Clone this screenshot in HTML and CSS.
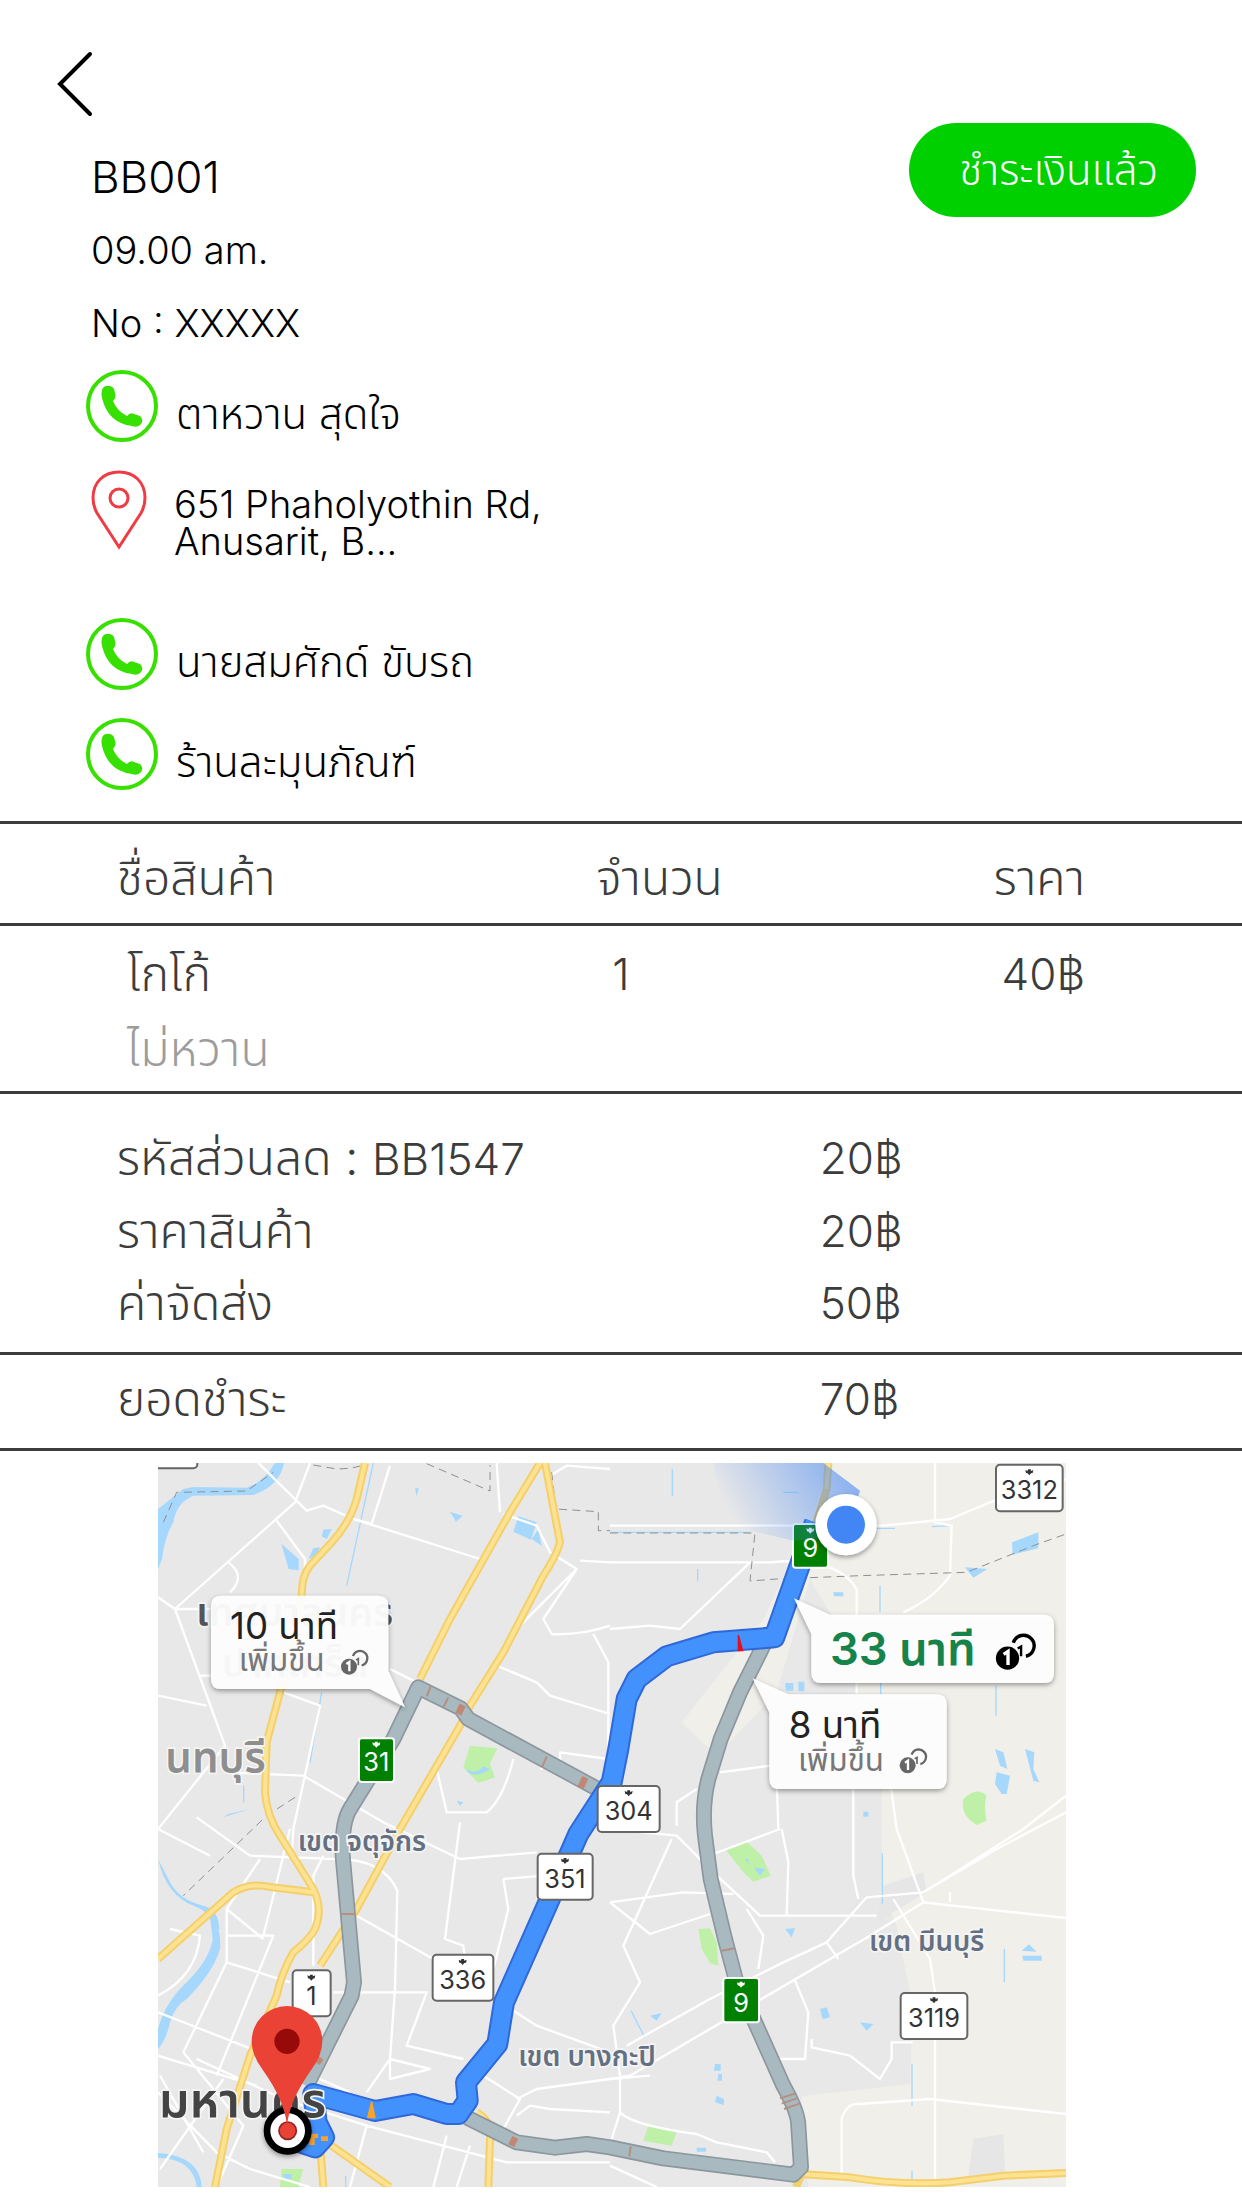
FILE: index.html
```html
<!DOCTYPE html>
<html lang="th">
<head>
<meta charset="utf-8">
<meta name="viewport" content="width=device-width, initial-scale=1">
<title>BB001</title>
<link rel="stylesheet" href="styles.css">
</head>
<body>
<svg class="defs" aria-hidden="true">
  <symbol id="phone" viewBox="0 0 72 72">
    <circle cx="36" cy="36" r="34" fill="none" stroke="#38e000" stroke-width="4"/>
    <path d="M16 20C17 15 25 14 28 19L29.500 25Q30 28 27 31Q31 41 41 46Q44 42 48 44L54 46Q58 50 55 54Q52 58 46 56Q22 53 16 28Q15 23 16 20Z" fill="#38e000"/>
  </symbol>
</svg>
<header class="top">
  <button class="back" type="button" aria-label="ย้อนกลับ">
    <svg viewBox="0 0 36 66" width="36" height="66"><path d="M33 3L3 33L33 63" fill="none" stroke="#000" stroke-width="4" stroke-linecap="round"/></svg>
  </button>
</header>
<main>
  <section class="order">
    <div class="order-info">
      <h1 class="order-id">BB001</h1>
      <p class="line">09.00 am.</p>
      <p class="line">No : XXXXX</p>
    </div>
    <button class="paid" type="button">ชำระเงินแล้ว</button>
  </section>
  <section class="contacts">
    <a class="contact" href="#customer"><svg class="icon"><use href="#phone"/></svg><span>ตาหวาน สุดใจ</span></a>
    <div class="address">
      <svg class="icon" viewBox="0 0 72 80"><path d="M33 77L11 43Q7 36 7 28C7 12 18 2 33 2S59 12 59 28Q59 36 55 43Z" fill="none" stroke="#ef3b43" stroke-width="3"/><circle cx="33" cy="28" r="9" fill="none" stroke="#ef3b43" stroke-width="3"/></svg>
      <address>651 Phaholyothin Rd,<br>Anusarit, B...</address>
    </div>
    <a class="contact" href="#driver"><svg class="icon"><use href="#phone"/></svg><span>นายสมศักด์ ขับรถ</span></a>
    <a class="contact" href="#shop"><svg class="icon"><use href="#phone"/></svg><span>ร้านละมุนภัณฑ์</span></a>
  </section>
  <table class="items">
    <thead><tr><th class="name">ชื่อสินค้า</th><th class="qty">จำนวน</th><th class="price">ราคา</th></tr></thead>
    <tbody><tr><td class="name">โกโก้<small>ไม่หวาน</small></td><td class="qty">1</td><td class="price">40฿</td></tr></tbody>
  </table>
  <table class="totals">
    <tbody>
      <tr><th>รหัสส่วนลด : <span class="code">BB1547</span></th><td>20฿</td></tr>
      <tr><th>ราคาสินค้า</th><td>20฿</td></tr>
      <tr><th>ค่าจัดส่ง</th><td>50฿</td></tr>
    </tbody>
    <tfoot><tr><th>ยอดชำระ</th><td>70฿</td></tr></tfoot>
  </table>
  <figure class="map">
    <svg viewBox="24 12 2724 2172" role="img" aria-label="แผนที่เส้นทาง">
      <defs>
        <linearGradient id="beam" x1="0" x2="1" y1=".3" y2="0"><stop offset="0" stop-color="#4285f4" stop-opacity="0"/><stop offset="1" stop-color="#4285f4" stop-opacity=".65"/></linearGradient>
        <filter id="shadow" x="-20%" y="-20%" width="140%" height="150%"><feDropShadow dx="0" dy="6" stdDeviation="8" flood-opacity=".4"/></filter>
        <g id="crest"><path d="M-12-7L-5-4L-4-9H4L5-4L12-7L10 2L5 3L0 9L-5 3L-10 2Z"/></g>
        <g id="toll"><circle cx="-12" cy="10" r="24"/><path d="M0-22A22 22 0 1 1 26 6" fill="none" stroke="currentColor" stroke-width="7"/><path d="M9-10L16-14V6" fill="none" stroke="currentColor" stroke-width="5"/><path d="M-20 2L-11-4V24" fill="none" stroke="#fff" stroke-width="7"/></g>
      </defs>
      <rect x="24" y="12" width="2724" height="2172" fill="#e8e8e8"/>
      <path class="land" d="M2040 12H2748V2184H1975L1955 1912L2280 1875L2288 1640L2240 1400L2195 1300V940L2120 690L2050 480L1980 360L1880 700L1700 890L1595 790L1840 480L1980 190Z"/>
      <path fill="#e6e6e7" d="M2470 2040L2560 2025L2566 2150L2455 2150ZM2200 1280L2320 1240L2330 1300L2180 1390Z"/>
      <g class="water">
        <path d="M24 150L100 90L130 84L290 86Q340 70 375 12H402Q390 80 310 108L130 110Q80 130 70 190Q45 230 36 300L24 330Z"/>
        <path d="M24 1200Q50 1310 130 1340Q190 1360 190 1420L208 1410Q206 1350 160 1340Q90 1325 60 1270L24 1200Z"/>
        <path d="M180 1370Q215 1400 210 1470Q190 1540 110 1620Q75 1640 60 1690Q50 1740 24 1770V1710Q45 1630 110 1570Q180 1500 188 1440Z"/>
        <path d="M24 2082Q150 2090 155 2184H140Q130 2100 24 2096Z"/>
        <path d="M1105 172L1160 190L1143 242L1090 218ZM1165 210L1175 260L1145 240ZM394 254L446 300V334L416 330ZM520 212L545 210L530 240L515 232ZM490 268L510 265L500 290L475 300ZM900 158L938 170L918 188ZM795 88H806L800 112ZM2586 250L2665 220V268L2588 287ZM2445 325L2512 330L2470 356ZM1905 672H1930V695H1908ZM1945 668H1963V697H1945ZM2050 400H2080V412H2052ZM2535 870L2560 880L2572 930L2550 920ZM2625 870L2653 880L2650 930L2668 970L2650 965ZM2540 940L2580 950L2570 1005H2555L2535 975ZM1905 1410L1935 1408L1925 1435ZM2010 1650L2030 1645L2040 1675L2018 1680ZM2130 1690L2170 1695L2150 1715ZM1500 1670L1535 1662L1520 1685ZM1695 1815H1712V1835H1692ZM1705 1845H1716V1865H1702ZM1700 1910L1722 1920V1938L1695 1930ZM2615 1475L2637 1456L2660 1478ZM2617 1490H2675V1505H2620ZM1640 2066H1668V2078H1640ZM2140 1058H2155V1073H2140ZM220 1075L300 1050L235 1065ZM920 1025L940 1030L930 1040Z"/>
      </g>
      <g class="creek"><path d="M1567 30V112M1643 330V367M2190 380V460M2192 670V705M2538 680V770M2197 1183V1334M2563 1470V1570M2286 1815V1940M2286 2135V2184M281 980V1030M2346 203L2400 200M1900 100H1945M670 12L590 380M515 700L480 910M1443 1655L1484 1735M587 2150V2184M1380 220H1800M2180 208H2235"/></g>
      <g fill="#bff0a8"><path d="M960 860L1042 868L1020 915L1035 955L985 972L940 925ZM1725 1170L1790 1148L1835 1190L1862 1250L1810 1268L1785 1245ZM1645 1410L1680 1408L1700 1450L1705 1520L1680 1512L1655 1470ZM1495 2000L1580 2018L1565 2060L1480 2045ZM395 2130H460L445 2184H390ZM2440 1020Q2480 980 2510 1010Q2500 1040 2510 1085L2480 1098Q2430 1070 2440 1020Z"/></g>
      <g class="water"><path d="M1812 1225L1845 1230L1830 1250ZM400 2145H425V2160H402ZM1785 1200H1795V1215Z"/><path d="M950 930Q980 950 1000 922L1020 930Q985 955 955 942Z"/></g>
      <g class="street">
        <path d="M325 12L470 155L520 140L610 180L990 300M480 12L435 130L75 450L24 415M380 185L465 300V330M720 20L665 195L610 180M235 310Q290 350 240 400M75 450L225 860L24 1110M225 860V940L460 950L700 1090L930 1200L1160 1180M24 710L170 740M400 700L510 740L430 1110L425 1200M75 450H185M145 650H185M720 630L800 670M1050 160L1040 12M1060 165L1160 200L1200 280L1280 330L1110 500M1290 305L1380 310M1280 330L1180 480L1205 525Q1290 530 1380 500M1040 620L1160 670L1200 710L1380 765M1330 525L1375 610V900L1230 880V910L1170 930M1380 30L1250 20L1200 50M1090 900Q1060 1020 1010 1060L890 1060L860 930M930 1090L885 1440L940 1460L945 1500M24 1110L180 1190M140 1075L300 1190L560 1200Q700 1200 742 1295L735 1590L720 1800L650 1900M620 1370L850 1500L1160 1700L1380 1780M550 1600H830L770 1760L940 1800M24 1660L280 1760L600 1900M330 1200L230 1350V1510L100 1780M230 1350L340 1440M230 1510L420 1570M230 1430H370L200 1850M420 1110L340 1430M720 1800L840 1830L720 1860V1800M24 1900L200 2080L300 2130L480 2184M140 1800L400 1920L650 2000L1070 2110L1380 2110M100 1780L280 2000L200 2184M220 1860L30 2130M30 1850L160 2080M24 1790L320 1880M650 2000L600 2184M890 2030L850 2184M960 2060L920 2184M1000 1850L1110 1920L1060 2010M1100 1920L1160 1890L1380 1860L1500 1850M1100 1970L1140 1940L1200 1950L1380 1960M1060 1260L1180 1250M1060 1260L1075 1350L1030 1530M520 1190L490 1250V1520M24 1610Q140 1550 150 1430L60 1410"/>
        <path d="M1380 200H2200L2400 180L2520 130L2748 60M1380 310H1860Q2060 290 2120 390V705M1800 310L1590 510L1500 500L1380 510M2355 12V190L2405 200L2400 350Q2350 420 2260 460M1380 1110L1580 1130L1690 1240L1830 1370H2180M1690 1185L1890 1110M1380 1330L1600 1300L1750 1305M1380 1330L1500 1425L1680 1365M1565 1140L1420 1460L1470 1570L1390 1700L1410 1850V1960Q1450 2000 1640 2025L1700 2050L1850 2080L1875 2110M1380 1860L1440 1850L2160 1430L2320 1330L2748 1377M1430 1760L1680 1620L1900 1510L2030 1450L2150 1315L2320 1300L2540 1170L2748 1060M2320 1330L2240 1110L2220 960M2230 1320L2340 1500L2355 1600V2170M2320 1300L2400 1250L2620 1110L2748 1010M2400 1300V1330M2110 960V1250L2125 1320M1895 1110L1915 1210L1910 1370M1880 960L1885 1110M1710 940L1860 920M1640 990L1580 1030V1100M1935 1565L1975 1660L1965 1800H1880M1985 1740V1765L2100 1790L2190 1860L2225 1800V1750H2288M2030 1450L2065 1500M2075 2160V1980Q2090 1930 2130 1935L2340 1920L2748 1965M1790 1350L1840 1430L1825 1530M1380 2120L1520 2184M1410 1960L1385 2040"/>
      </g>
      <g class="border"><path d="M490 18L560 30L600 28L645 18M830 14L1020 96V18M1205 40L1218 150L1345 158V215H1380M435 1015L350 1070L100 1310M1380 222H1815L1800 366L1880 360L2130 350L2450 340L2650 260L2748 225M40 190L80 100L290 96L370 40"/></g>
      <path class="hw" d="M645 12L620 120Q600 190 545 250L480 320Q455 350 455 410L390 700L350 850L345 1000Q350 1070 390 1130L490 1290Q520 1350 495 1410Q480 1440 430 1480Q395 1540 380 1610L300 1790L230 2010L195 2184M24 1500L250 1300Q300 1270 360 1284L490 1300M1170 12L1080 160L900 480L810 660M1185 12L1230 250Q1220 290 1180 350L1060 580L960 740L930 800L750 1110L620 1350L510 1520M980 1960Q1030 1990 1020 2040L1015 2184M530 2050L720 2184M510 2050L520 2184M1950 2145L2100 2155Q2250 2180 2400 2170L2560 2150L2748 2142M1955 2145L1938 2184M2035 12L2030 90L2000 190"/>
      <path class="core" d="M645 12L620 120Q600 190 545 250L480 320Q455 350 455 410L390 700L350 850L345 1000Q350 1070 390 1130L490 1290Q520 1350 495 1410Q480 1440 430 1480Q395 1540 380 1610L300 1790L230 2010L195 2184M24 1500L250 1300Q300 1270 360 1284L490 1300M1170 12L1080 160L900 480L810 660M1185 12L1230 250Q1220 290 1180 350L1060 580L960 740L930 800L750 1110L620 1350L510 1520M980 1960Q1030 1990 1020 2040L1015 2184M530 2050L720 2184M510 2050L520 2184M1950 2145L2100 2155Q2250 2180 2400 2170L2560 2150L2748 2142M2035 12L2030 90"/>
      <g class="alt-edge"><path d="M1380 1010L955 780L932 748L805 685L730 840L600 1050Q575 1090 578 1190L612 1570L605 1610L470 1880M1850 540L1770 700L1712 840L1675 960Q1655 1040 1665 1130L1682 1260L1725 1440L1757 1560L1900 1880Q1945 1960 1945 2000L1953 2125L1930 2147L1540 2098L1380 2065L1310 2055L1215 2066L1100 2050L950 1975"/></g>
      <g class="alt"><path d="M1380 1010L955 780L932 748L805 685L730 840L600 1050Q575 1090 578 1190L612 1570L605 1610L470 1880M1850 540L1770 700L1712 840L1675 960Q1655 1040 1665 1130L1682 1260L1725 1440L1757 1560L1900 1880Q1945 1960 1945 2000L1953 2125L1930 2147L1540 2098L1380 2065L1310 2055L1215 2066L1100 2050L950 1975"/></g>
      <path d="M842 682L830 712M895 715L880 745M1190 892L1176 925M572 1365H614M1715 1475L1753 1468M1890 1918L1935 1904M1895 1934L1940 1918M1902 1950L1948 1934M1442 2062L1438 2092" stroke="#b58f80" stroke-width="6"/>
      <path d="M938 738L925 765M1306 955L1292 985M1096 2035L1084 2060M515 1810L500 1800" stroke="#c08874" stroke-width="20"/>
      <path class="blue-edge" d="M1995 190L1873 535L1690 550L1550 592L1460 660L1430 720L1405 870L1385 970L1285 1125L1195 1330L1062 1630L1042 1755L948 1870L953 1925L925 1965H890L790 1935L675 1956L490 1905L500 1990L522 2035L495 2065L450 2050"/>
      <path class="blue" d="M1995 190L1873 535L1690 550L1550 592L1460 660L1430 720L1405 870L1385 970L1285 1125L1195 1330L1062 1630L1042 1755L948 1870L953 1925L925 1965H890L790 1935L675 1956L490 1905L500 1990L522 2035L495 2065L450 2050"/>
      <path d="M1765 528L1778 575H1765Z" fill="#e01020" stroke="#e01020" stroke-width="4"/>
      <path d="M665 1928L675 1976H653ZM483 2026H502V2035H492V2056H480ZM515 2034H532V2044H515Z" fill="#f9a32a" stroke="#f9a32a" stroke-width="4"/>
      <g class="shield">
        <rect x="-60" y="-60" width="202" height="88" rx="12"/>
        <rect x="2538" y="17" width="200" height="140" rx="12"/><rect x="1343" y="981" width="186" height="138" rx="12"/><rect x="1163" y="1184" width="165" height="138" rx="12"/><rect x="848" y="1487" width="182" height="138" rx="12"/><rect x="428" y="1534" width="114" height="138" rx="12"/><rect x="2252" y="1602" width="200" height="138" rx="12"/>
      </g>
      <g class="shield-green"><rect x="627" y="838" width="105" height="131" rx="8"/><rect x="1929" y="195" width="105" height="131" rx="8"/><rect x="1720" y="1557" width="107" height="133" rx="8"/></g>
      <g fill="#333"><use href="#crest" x="2638" y="40"/><use href="#crest" x="1436" y="1003"/><use href="#crest" x="1245" y="1206"/><use href="#crest" x="938" y="1509"/><use href="#crest" x="484" y="1556"/><use href="#crest" x="2352" y="1624"/></g>
      <g fill="#fff"><use href="#crest" x="679" y="857"/><use href="#crest" x="1981" y="215"/><use href="#crest" x="1773" y="1577"/></g>
      <g class="num"><text x="2638" y="121">3312</text><text x="1436" y="1083">304</text><text x="1245" y="1287">351</text><text x="938" y="1590">336</text><text x="484" y="1637">1</text><text x="2352" y="1705">3119</text></g>
      <g class="num light"><text x="679" y="937">31</text><text x="1981" y="294">9</text><text x="1773" y="1658">9</text></g>
      <path d="M1690 12H2020L2130 95L2088 230L1930 245L1720 195Z" fill="url(#beam)"/>
      <g filter="url(#shadow)"><circle cx="2088" cy="197" r="92" fill="#fff"/></g><circle cx="2088" cy="197" r="57" fill="#4285f4"/>
      <g class="place">
        <text class="dark" x="138" y="500">เทศบาลนคร</text><text class="dark" x="215" y="655">ปากเกร็ด</text>
        <text class="city" x="46" y="940">นทบุรี</text>
        <text x="443" y="1177">เขต จตุจักร</text><text x="1105" y="1820">เขต บางกะปิ</text><text x="2157" y="1477">เขต มีนบุรี</text>
        <text class="capital" x="26" y="1973">มหานคร</text>
      </g>
      <g class="bubble" filter="url(#shadow)">
        <path d="M213 410H685Q715 410 715 440V635L765 745L660 690H213Q183 690 183 660V440Q183 410 213 410Z"/>
        <path d="M1932 418L2040 467H2682Q2712 467 2712 497V642Q2712 672 2682 672H2014Q1984 672 1984 642V525Z"/>
        <path d="M1808 658L1915 706H2360Q2390 706 2390 736V960Q2390 990 2360 990H1888Q1858 990 1858 960V760Z"/>
      </g>
      <g class="eta"><text x="240" y="540">10 นาที</text><text x="1916" y="838">8 นาที</text></g>
      <g class="more"><text x="266" y="635">เพิ่มขึ้น</text><text x="1944" y="935">เพิ่มขึ้น</text></g>
      <text class="best" x="2040" y="618">33 นาที</text>
      <g fill="#666" color="#666"><use href="#toll" x="609" y="613"/><use href="#toll" x="2285" y="909"/></g>
      <g transform="translate(2590 583) scale(1.45)" color="#000"><use href="#toll"/></g>
      <g filter="url(#shadow)"><circle cx="413" cy="2015" r="62" fill="#fff" stroke="#000" stroke-width="20"/></g>
      <circle cx="413" cy="2015" r="26" fill="#ea4335" stroke="#8f2320" stroke-width="5"/>
      <path d="M411 2000Q404 1925 340 1835Q305 1790 305 1747A106 106 0 0 1 517 1747Q517 1790 482 1835Q418 1925 411 2000Z" fill="#ea4335"/>
      <circle cx="411" cy="1747" r="38" fill="#960a0a"/>
    </svg>
  </figure>
</main>
</body>
</html>
```
FILE: styles.css
```css
* { box-sizing: border-box; }
body { margin: 0; background: #fff; color: #000; font-family: Inter, "Noto Sans Thai", "Noto Sans", sans-serif; font-size: 38px; font-weight: 350; }
h1, p, figure { margin: 0; }
button { border: 0; background: none; padding: 0; font: inherit; }
a { color: inherit; text-decoration: none; }
.defs { position: absolute; width: 0; height: 0; }
.top { padding: 51px 57px 0; }
.back { display: block; }
.back svg { display: block; }
.order { display: flex; justify-content: space-between; align-items: flex-start; padding: 6px 46px 0 91px; }
.order-info { padding-top: 17px; }
.order-id { font-size: 44px; font-weight: inherit; line-height: 74px; }
.line { line-height: 73px; }
.paid { height: 94px; padding: 3px 38px 0 50px; border-radius: 47px; background: #00cf00; color: #fff; font-size: 42px; }
.contacts { display: flex; flex-direction: column; gap: 28px; padding: 10px 86px 31px; }
.contact, .address { display: flex; align-items: center; gap: 18px; }
.contact { line-height: 72px; }
.contact span { padding-top: 16px; line-height: 56px; font-size: 42px; }
.icon { width: 72px; height: 72px; flex: none; }
.address { align-items: flex-start; min-height: 120px; gap: 16px; }
.address .icon { height: 80px; }
address { font-style: normal; line-height: 37px; padding-top: 16px; }
table { width: 100%; border-collapse: collapse; table-layout: fixed; color: #3c3c3c; font-size: 48px; line-height: 72px; }
th, td { font-weight: inherit; text-align: left; vertical-align: top; padding: 0; }
.items th { height: 102px; padding-top: 18px; }
.items tr { border-top: 3px solid #3c3c3c; }
.items td { height: 166px; padding-top: 12px; }
.items .name { width: 48%; padding-left: 117px; }
.items td.name { padding-left: 127px; }
.items td.qty { padding-left: 16px; }
.items .price { text-align: right; padding-right: 157px; }
.items small { display: block; font-size: 48px; line-height: 78px; color: #9c9c9c; }
.totals { border-top: 3px solid #3c3c3c; border-bottom: 3px solid #3c3c3c; }
.items td.qty, .items td.price, .totals td, .code { font-size: 44px; }
.totals th { width: 66%; padding-left: 117px; }
.totals tbody tr:first-child > * { padding-top: 28px; }
.totals tbody tr:last-child > * { padding-bottom: 13px; }
.totals tfoot { border-top: 3px solid #3c3c3c; }
.totals tfoot > tr > * { padding: 8px 0 13px; }
.totals tfoot th { padding-left: 117px; }
.map { padding: 12px 176px 20px 158px; }
.map svg { display: block; width: 100%; height: auto; overflow: hidden; }
.land { fill: #f0efea; }
.water { fill: #a5d8fc; }
.creek { fill: none; stroke: #a5d8fc; stroke-width: 4; }
.street { fill: none; stroke: #fff; stroke-width: 7; stroke-linejoin: round; }
.border { fill: none; stroke: #8f8f8f; stroke-width: 3; stroke-dasharray: 24 16; }
.hw { fill: none; stroke: #f4cf6c; stroke-width: 24; stroke-linejoin: round; }
.core { fill: none; stroke: #fde391; stroke-width: 12; stroke-linejoin: round; }
.alt-edge, .alt { fill: none; stroke-linejoin: round; }
.alt-edge { stroke: #8b969d; stroke-width: 48; }
.alt { stroke: #a9b9c0; stroke-width: 38; }
.blue-edge, .blue { fill: none; stroke-linejoin: round; }
.blue-edge { stroke: #2f68d8; stroke-width: 66; }
.blue { stroke: #4391fd; stroke-width: 54; }
.shield { fill: #fff; stroke: #666; stroke-width: 6; }
.shield-green { fill: #008000; stroke: #fff; stroke-width: 6; }
.num { font-size: 76px; font-weight: 400; fill: #333; text-anchor: middle; }
.num.light { fill: #fff; }
.place { font-size: 83px; font-weight: 600; fill: #647081; stroke: #f4f4f4; stroke-width: 10; paint-order: stroke; }
.place .dark { font-size: 118px; fill: #555; }
.place .city { font-size: 126px; fill: #8e8e8e; }
.place .capital { font-size: 146px; fill: #444; }
.bubble { fill: #fff; fill-opacity: .94; }
.eta { font-size: 110px; font-weight: 400; fill: #222; }
.more { font-size: 94px; font-weight: 400; fill: #777; }
.best { font-size: 136px; font-weight: 600; fill: #16834a; }
```
